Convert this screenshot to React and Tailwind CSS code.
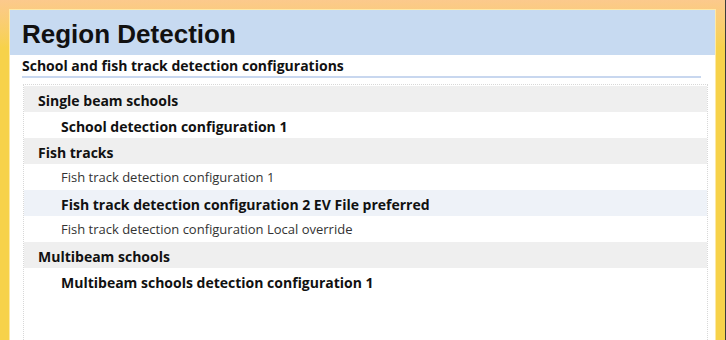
export default function App() {
  const rows = [
    { label: "Single beam schools", kind: "group" },
    { label: "School detection configuration 1", kind: "bold" },
    { label: "Fish tracks", kind: "group" },
    { label: "Fish track detection configuration 1", kind: "normal" },
    { label: "Fish track detection configuration 2 EV File preferred", kind: "selected" },
    { label: "Fish track detection configuration Local override", kind: "normal" },
    { label: "Multibeam schools", kind: "group" },
    { label: "Multibeam schools detection configuration 1", kind: "bold" },
  ];

  return (
    <div className="w-[726px] h-[340px] overflow-hidden bg-[#3c3c3c] font-['Open_Sans',sans-serif]">
      <div className="w-[725px] h-[340px] flex flex-col bg-[#f7d24a] bg-gradient-to-b from-[#fcc98c] from-0% to-[#f7d24a] to-[14%] pl-[9px] pr-[9px] pt-[9px]">
        <div className="flex-1 flex flex-col bg-white border-l border-r border-t border-[#fde9a6]">
          <div className="h-[45px] bg-[#c7daf1] px-[12px] flex items-center">
            <h1 className="font-['Liberation_Sans',sans-serif] text-[26px] font-bold text-[#111] leading-none pt-[2px]">
              Region Detection
            </h1>
          </div>
          <div className="px-[12px] pt-[2px]">
            <div className="text-[14px] leading-[18px] font-bold text-[#111] pb-[1px] border-b-2 border-[#c8d7ef] mr-[2px]">
              School and fish track detection configurations
            </div>
          </div>
          <div className="flex-1 ml-[13px] mr-[7px] mt-[6px] border-l border-r border-t border-dotted border-[#d8d8d8] pt-[1px]">
            {rows.map((r) => (
              <div
                key={r.label}
                className={
                  r.kind === "group"
                    ? "h-[26px] flex items-center pl-[14px] pt-[2px] bg-[#efefef] text-[14px] font-bold text-[#111]"
                    : r.kind === "selected"
                    ? "h-[26px] flex items-center pl-[37px] pt-[2px] bg-[#eef2f8] text-[14px] font-bold text-[#111]"
                    : r.kind === "bold"
                    ? "h-[26px] flex items-center pl-[37px] pt-[2px] text-[14px] font-bold text-[#111]"
                    : "h-[26px] flex items-center pl-[37px] pt-[2px] text-[13px] text-[#333]"
                }
              >
                {r.label}
              </div>
            ))}
          </div>
        </div>
      </div>
    </div>
  );
}
